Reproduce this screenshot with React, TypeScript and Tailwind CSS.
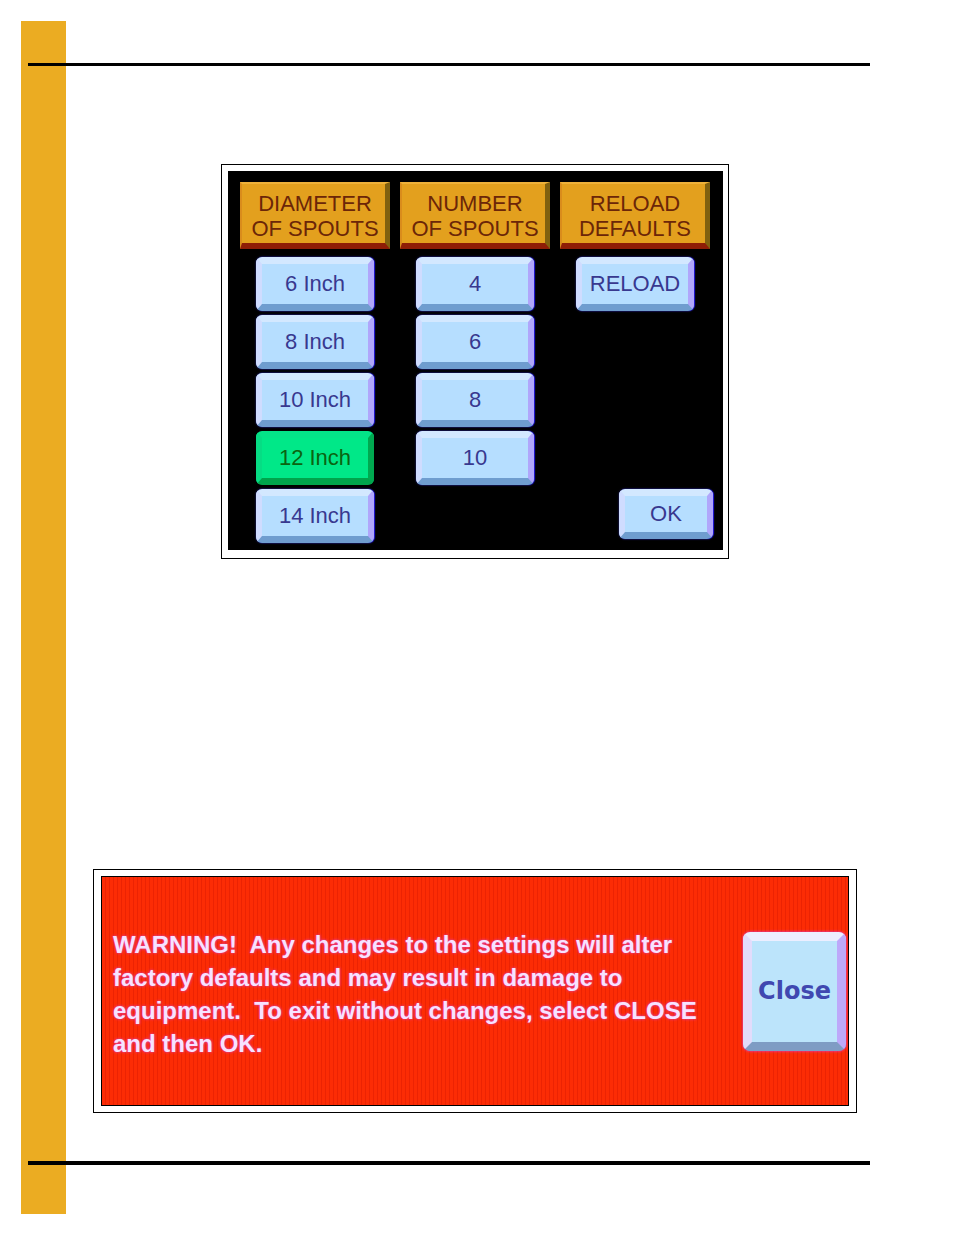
import type { ReactNode } from 'react';
import { useState } from 'react';

const diameters = ['6 Inch', '8 Inch', '10 Inch', '12 Inch', '14 Inch'];
const counts = ['4', '6', '8', '10'];

const keyShape =
  'flex shrink-0 items-center justify-center rounded-[6px] border-x-[6px] border-t-[7px] border-b-[7px] text-[22px] leading-[26px]';
const keyPale =
  'border-t-[#d3e8ff] border-r-[#b0a6fb] border-b-[#6f9dcf] border-l-[#cfdcff] bg-[#b6deff] text-[#38388f] shadow-[1px_0_1px_#2418e0,0_0_2px_#3434a8]';
const keyGreen =
  'border-t-[#04e488] border-r-[#00a950] border-b-[#00a44c] border-l-[#06dc84] bg-[#00e888] text-[#0b6410]';

type KeyProps = {
  children: ReactNode;
  size?: string;
  active?: boolean;
  onClick?: () => void;
};

function Key({ children, size = 'h-[54px] w-[118px]', active, onClick }: KeyProps) {
  return (
    <button
      type="button"
      aria-pressed={active}
      onClick={onClick}
      className={`${keyShape} ${size} ${active ? keyGreen : keyPale}`}
    >
      {children}
    </button>
  );
}

function Heading({ top, bottom }: { top: string; bottom: string }) {
  return (
    <h2 className="mb-1 w-full border-t-2 border-r-[5px] border-b-[6px] border-l-2 border-t-[#eeb13a] border-r-[#80600f] border-b-[#8f1d06] border-l-[#d98c1c] bg-[#e3a01e] pt-[7px] pb-[2px] pl-[3px] text-center text-[22px] leading-[25px] text-[#6b2608]">
      {top}
      <br />
      {bottom}
    </h2>
  );
}

function Column({ children }: { children: ReactNode }) {
  return <div className="flex w-[150px] flex-col items-center gap-1">{children}</div>;
}

export default function App() {
  const [diameter, setDiameter] = useState('12 Inch');
  const [count, setCount] = useState('');

  return (
    <div className="flex min-h-screen bg-white py-[21px] pr-[84px] pl-[21px] font-['Liberation_Sans',Arial,sans-serif]">
      <div className="w-[45px] shrink-0 bg-[#ebac22]" />
      <main className="z-10 -ml-[38px] flex min-w-0 flex-1 flex-col pt-[42px] pb-[49px]">
        <hr className="h-[3px] border-0 bg-black" />

        <div className="flex flex-1 flex-col items-center pt-[98px] pr-[13px] pb-12 pl-[65px]">
          <section
            aria-label="Spout settings"
            className="mb-10 border border-black pt-[6px] pr-[5px] pb-2 pl-[6px]"
          >
            <div className="flex gap-[10px] bg-black pt-[11px] pr-[10px] pb-[7px] pl-3">
              <Column>
                <Heading top="DIAMETER" bottom="OF SPOUTS" />
                {diameters.map((d) => (
                  <Key key={d} active={d === diameter} onClick={() => setDiameter(d)}>
                    {d}
                  </Key>
                ))}
              </Column>
              <Column>
                <Heading top="NUMBER" bottom="OF SPOUTS" />
                {counts.map((c) => (
                  <Key key={c} active={c === count} onClick={() => setCount(c)}>
                    {c}
                  </Key>
                ))}
              </Column>
              <div className="flex w-[153px] flex-col justify-between pb-1">
                <Column>
                  <Heading top="RELOAD" bottom="DEFAULTS" />
                  <Key onClick={() => setDiameter('12 Inch')}>RELOAD</Key>
                </Column>
                <div className="flex justify-end">
                  <Key size="h-[50px] w-[94px]">OK</Key>
                </div>
              </div>
            </div>
          </section>

          <section
            aria-label="Warning"
            className="mt-auto w-full border border-black px-[7px] py-[6px]"
          >
            <div className="flex min-h-[230px] items-center justify-between border border-black bg-[#fb2a04] bg-[repeating-linear-gradient(90deg,#fc2c05_0px,#fc2c05_3px,#ec2303_3px,#ec2303_4px)] pr-[2px] pl-[11px]">
              <p className="pt-[5px] text-[24px] leading-[33px] font-bold text-[#f7e2ff] [text-shadow:0_0_3px_#e040d0]">
                WARNING!&nbsp; Any changes to the settings will alter
                <br />
                factory defaults and may result in damage to
                <br />
                equipment.&nbsp; To exit without changes, select CLOSE
                <br />
                and then OK.
              </p>
              <button
                type="button"
                className="flex h-[119px] w-[103px] shrink-0 items-center justify-center rounded-[7px] border-[9px] border-t-[#eceeff] border-r-[#bda8fa] border-b-[#7f9cc4] border-l-[#e2dcfb] bg-[#bce4fb] font-['DejaVu_Sans',sans-serif] text-[24px] leading-[30px] font-bold text-[#4048b0] shadow-[0_0_3px_#e040e8]"
              >
                Close
              </button>
            </div>
          </section>
        </div>

        <hr className="h-1 border-0 bg-black" />
      </main>
    </div>
  );
}
